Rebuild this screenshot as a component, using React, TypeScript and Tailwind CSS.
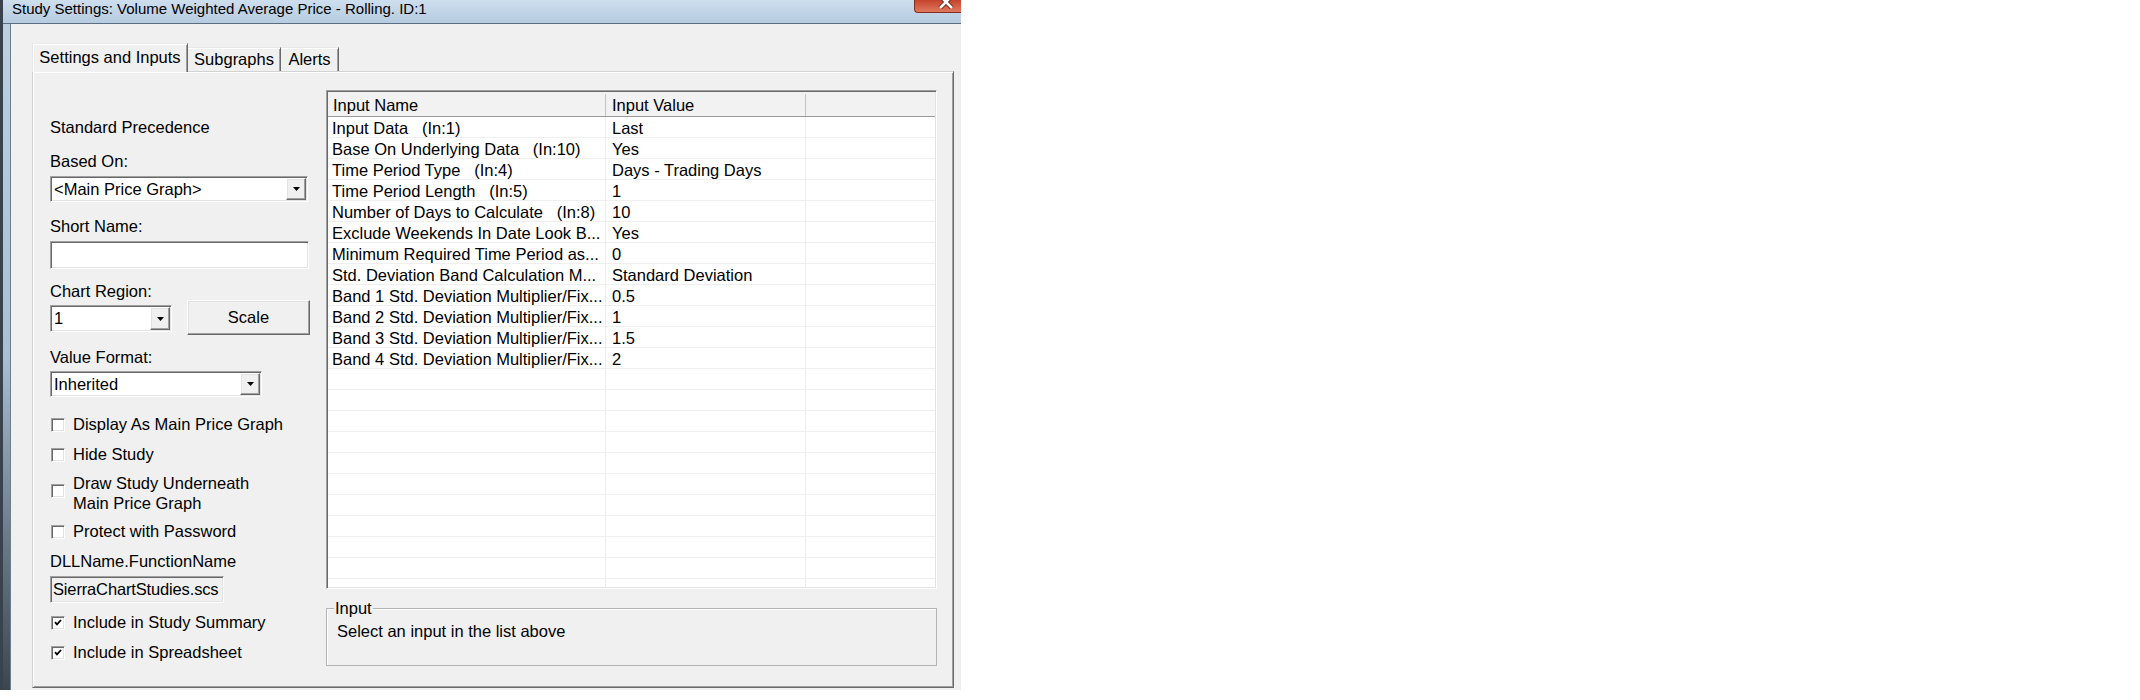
import type { ReactNode } from 'react';

const INPUTS: [string, string][] = [
  ['Input Data   (In:1)', 'Last'],
  ['Base On Underlying Data   (In:10)', 'Yes'],
  ['Time Period Type   (In:4)', 'Days - Trading Days'],
  ['Time Period Length   (In:5)', '1'],
  ['Number of Days to Calculate   (In:8)', '10'],
  ['Exclude Weekends In Date Look B...', 'Yes'],
  ['Minimum Required Time Period as...', '0'],
  ['Std. Deviation Band Calculation M...', 'Standard Deviation'],
  ['Band 1 Std. Deviation Multiplier/Fix...', '0.5'],
  ['Band 2 Std. Deviation Multiplier/Fix...', '1'],
  ['Band 3 Std. Deviation Multiplier/Fix...', '1.5'],
  ['Band 4 Std. Deviation Multiplier/Fix...', '2'],
];

// pad the list out with empty rows, like the real grid
const ROWS: [string, string][] = [...INPUTS, ...Array.from({ length: 11 }, () => ['', ''] as [string, string])];

const sunken =
  'border border-t-[#a0a0a0] border-l-[#a0a0a0] border-r-white border-b-white shadow-[inset_1px_1px_0_#696969,inset_-1px_-1px_0_#e3e3e3]';
const raised =
  'border border-t-white border-l-white border-r-[#696969] border-b-[#696969] shadow-[inset_-1px_-1px_0_#a0a0a0,inset_1px_1px_0_#e3e3e3]';

function Combo({ value, className }: { value: string; className: string }) {
  return (
    <div className={`flex bg-white p-px ${sunken} ${className}`}>
      <span className="flex-1 whitespace-nowrap pl-[2px] leading-[22px]">{value}</span>
      <span className={`flex w-[20px] items-center justify-center bg-[#f0f0f0] ${raised}`}>
        <svg width="7" height="4" viewBox="0 0 7 4">
          <path d="M0 0h7L3.5 4z" fill="#000" />
        </svg>
      </span>
    </div>
  );
}

function Check({ label, checked, className = '' }: { label: ReactNode; checked?: boolean; className?: string }) {
  return (
    <div className={`flex items-center ${className}`}>
      <span className={`ml-px mr-[8px] flex h-[14px] w-[14px] shrink-0 items-center justify-center bg-white ${sunken}`}>
        {checked && (
          <svg width="8" height="7" viewBox="0 0 8 7">
            <path d="M1 3.2l2 2.2L7 1" stroke="#000" strokeWidth="1.8" fill="none" />
          </svg>
        )}
      </span>
      <span className="leading-[19px]">{label}</span>
    </div>
  );
}

function CloseButton() {
  return (
    <div className="ml-auto h-[13px] w-[47px] rounded-bl-[4px] border-b border-l border-[#80301f] bg-gradient-to-b from-[#c5432c] to-[#e1785d] pl-[23px]">
      <svg width="16" height="9" viewBox="0 0 16 9">
        <path d="M2 -4L14 8M14 -4L2 8" stroke="#6b2416" strokeWidth="4.5" />
        <path d="M2 -4L14 8M14 -4L2 8" stroke="#fff" strokeWidth="2.6" />
      </svg>
    </div>
  );
}

export default function App() {
  return (
    <div className="h-[700px] w-[2140px] bg-white font-['Liberation_Sans',Arial,sans-serif] text-[16.5px] text-black">
      <div className="flex h-[690px] w-[961px] flex-col border-l-[3px] border-[#39434d]">
        <div className="flex h-[24px] shrink-0 items-start border-b border-[#5b6e81] bg-gradient-to-b from-[#cddeee] to-[#b7cce0]">
          <span className="pl-[9px] text-[15px] leading-[17px]">
            Study Settings: Volume Weighted Average Price - Rolling. ID:1
          </span>
          <CloseButton />
        </div>

        <div className="flex flex-1">
          <div className="w-[8px] border-r border-[#6e7d8b] bg-gradient-to-b from-[#bcd0e2] via-[#a9bfd4] to-[#3c4650]" />

          <div className="flex flex-1 flex-col bg-[#f0f0f0] pl-[21px] pr-[7px] pt-[19px]">
            {/* tabs */}
            <div className="flex h-[28px] items-end">
              <div className="relative z-10 mb-[-1px] h-[29px] w-[156px] border-l border-t border-r border-[#e8e8e8] border-r-[#696969] bg-[#f0f0f0] pt-[4px] text-center leading-[19px] shadow-[inset_1px_1px_0_#fff,inset_-1px_0_0_#a0a0a0]">
                Settings and Inputs
              </div>
              <div className="h-[24px] w-[93px] border-t border-r border-[#e8e8e8] border-r-[#696969] pt-[2px] text-center leading-[19px] shadow-[inset_0_1px_0_#fff,inset_-1px_0_0_#a0a0a0]">
                Subgraphs
              </div>
              <div className="h-[24px] w-[58px] border-t border-r border-[#e8e8e8] border-r-[#696969] pt-[2px] text-center leading-[19px] shadow-[inset_0_1px_0_#fff,inset_-1px_0_0_#a0a0a0]">
                Alerts
              </div>
            </div>

            {/* tab page */}
            <div className="flex h-[617px] border-l border-t border-r border-b border-[#d2d2d2] border-r-[#696969] border-b-[#696969] pl-[17px] shadow-[inset_1px_1px_0_#fff,inset_-1px_-1px_0_#a0a0a0]">
              <div className="flex w-[276px] flex-col pt-[46px]">
                <div className="leading-[19px]">Standard Precedence</div>
                <div className="mt-[15px] leading-[19px]">Based On:</div>
                <Combo value="<Main Price Graph>" className="mt-[5px] h-[26px] w-[258px]" />
                <div className="mt-[15px] leading-[19px]">Short Name:</div>
                <div className={`mt-[5px] h-[28px] w-[259px] bg-white ${sunken}`} />
                <div className="mt-[13px] leading-[19px]">Chart Region:</div>
                <div className="mt-[-1px] flex items-start">
                  <Combo value="1" className="mt-[5px] h-[27px] w-[122px]" />
                  <button className={`ml-[15px] h-[35px] w-[123px] bg-[#f0f0f0] leading-[19px] ${raised}`}>Scale</button>
                </div>
                <div className="mt-[13px] leading-[19px]">Value Format:</div>
                <Combo value="Inherited" className="mt-[4px] h-[26px] w-[212px]" />
                <Check label="Display As Main Price Graph" className="mt-[18px]" />
                <Check label="Hide Study" className="mt-[11px]" />
                <div className="mt-[9px] flex items-start">
                  <span className={`ml-px mr-[8px] mt-[11px] h-[14px] w-[14px] shrink-0 bg-white ${sunken}`} />
                  <span className="leading-[20px]">
                    Draw Study Underneath
                    <br />
                    Main Price Graph
                  </span>
                </div>
                <Check label="Protect with Password" className="mt-[9px]" />
                <div className="mt-[11px] leading-[19px]">DLLName.FunctionName</div>
                <div className={`mt-[5px] h-[27px] w-[174px] whitespace-nowrap bg-[#f0f0f0] pl-[2px] leading-[24px] tracking-[-0.15px] ${sunken}`}>
                  SierraChartStudies.scs
                </div>
                <Check label="Include in Study Summary" checked className="mt-[10px]" />
                <Check label="Include in Spreadsheet" checked className="mt-[11px]" />
              </div>

              <div className="flex w-[611px] flex-col pt-[18px]">
                <div className={`flex h-[499px] flex-col overflow-hidden bg-white p-px ${sunken}`}>
                  <div className="grid h-[25px] shrink-0 grid-cols-[278px_200px_1fr] border-b border-[#9a9a9a] bg-[#f2f2f2] pt-[2px] leading-[22px]">
                    <div className="border-r border-[#c4c4c4] pl-[5px]">Input Name</div>
                    <div className="border-r border-[#c4c4c4] pl-[6px]">Input Value</div>
                    <div />
                  </div>
                  <div className="flex-1 overflow-hidden">
                    {ROWS.map(([name, value], i) => (
                      <div key={i} className="grid h-[21px] grid-cols-[278px_200px_1fr] border-b border-[#efefef] leading-[23px]">
                        <div className="whitespace-pre border-r border-[#ececec] pl-[4px]">{name}</div>
                        <div className="whitespace-pre border-r border-[#ececec] pl-[6px]">{value}</div>
                        <div />
                      </div>
                    ))}
                  </div>
                </div>

                <div className="relative mt-[19px] h-[58px] border border-[#b4b4b4] pl-[10px] pt-[13px] leading-[19px] shadow-[inset_1px_1px_0_#fff]">
                  <span className="absolute left-[7px] top-[-10px] bg-[#f0f0f0] px-px leading-[19px]">Input</span>
                  Select an input in the list above
                </div>
              </div>
            </div>
          </div>
        </div>
      </div>
    </div>
  );
}
